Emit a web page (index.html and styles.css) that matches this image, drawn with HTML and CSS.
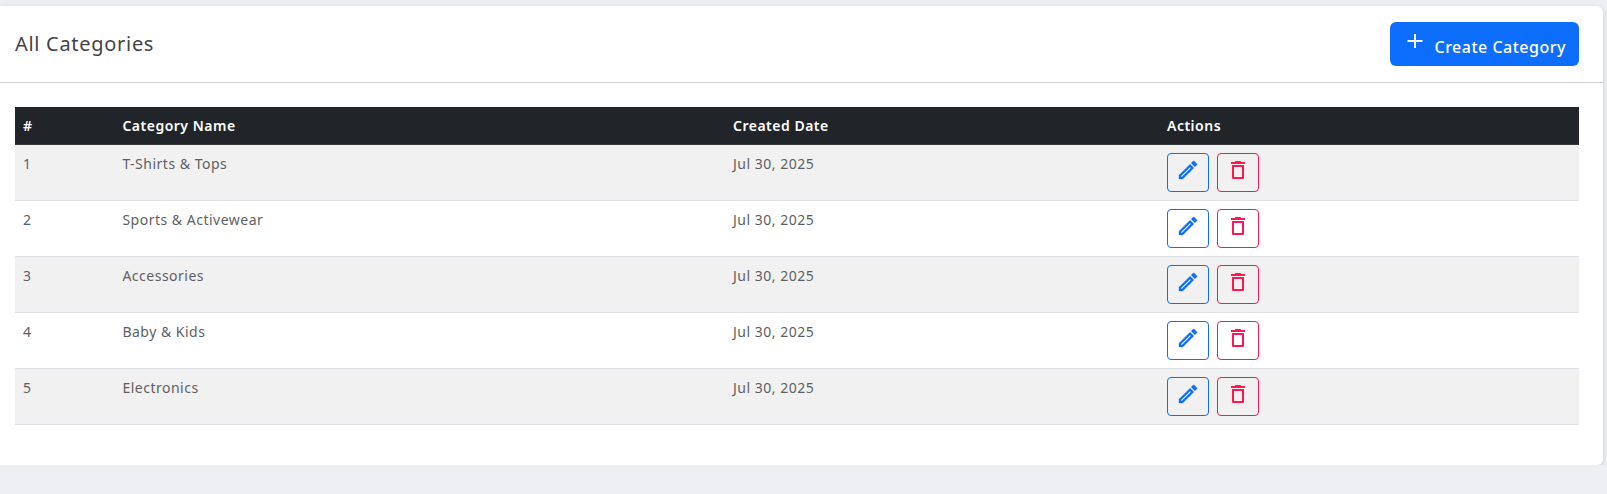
FILE: index.html
```html
<!DOCTYPE html>
<html lang="en">
<head>
<meta charset="utf-8">
<title>All Categories</title>
<link rel="stylesheet" href="styles.css">
</head>
<body>
<svg class="sprite" aria-hidden="true">
  <symbol id="pencil" viewBox="0 0 24 24"><path d="M14.06 9L15 9.94L5.92 19H5V18.08L14.06 9M17.66 3C17.41 3 17.15 3.1 16.96 3.29L15.13 5.12L18.88 8.87L20.71 7.04C21.1 6.65 21.1 6 20.71 5.63L18.37 3.29C18.17 3.09 17.92 3 17.66 3M14.06 6.19L3 17.25V21H6.75L17.81 9.94L14.06 6.19Z"/></symbol>
  <symbol id="trash" viewBox="0 0 24 24"><path fill-rule="evenodd" d="M6 7H18V20.2L17.2 21H6.8L6 20.2ZM8 9V19H16V9ZM15.5 4L14.5 3H9.5L8.5 4H5V6H19V4Z"/></symbol>
  <symbol id="plus" viewBox="0 0 24 24"><path d="M19.5 13H13V19H11V13H4.5V11H11V5H13V11H19.5Z"/></symbol>
</svg>
<main class="card">
  <header class="card-header">
    <h1 class="card-title">All Categories</h1>
    <button class="create"><svg class="create-icon"><use href="#plus"/></svg><span class="create-label">Create Category</span></button>
  </header>
  <div class="card-body">
    <table class="table">
      <colgroup><col class="col-id"><col class="col-name"><col class="col-date"><col></colgroup>
      <thead>
        <tr><th>#</th><th>Category Name</th><th>Created Date</th><th>Actions</th></tr>
      </thead>
      <tbody>
        <tr><td>1</td><td>T-Shirts &amp; Tops</td><td>Jul 30, 2025</td><td><div class="actions"><button class="action edit" aria-label="Edit"><svg class="icon"><use href="#pencil"/></svg></button><button class="action delete" aria-label="Delete"><svg class="icon"><use href="#trash"/></svg></button></div></td></tr>
        <tr><td>2</td><td>Sports &amp; Activewear</td><td>Jul 30, 2025</td><td><div class="actions"><button class="action edit" aria-label="Edit"><svg class="icon"><use href="#pencil"/></svg></button><button class="action delete" aria-label="Delete"><svg class="icon"><use href="#trash"/></svg></button></div></td></tr>
        <tr><td>3</td><td>Accessories</td><td>Jul 30, 2025</td><td><div class="actions"><button class="action edit" aria-label="Edit"><svg class="icon"><use href="#pencil"/></svg></button><button class="action delete" aria-label="Delete"><svg class="icon"><use href="#trash"/></svg></button></div></td></tr>
        <tr><td>4</td><td>Baby &amp; Kids</td><td>Jul 30, 2025</td><td><div class="actions"><button class="action edit" aria-label="Edit"><svg class="icon"><use href="#pencil"/></svg></button><button class="action delete" aria-label="Delete"><svg class="icon"><use href="#trash"/></svg></button></div></td></tr>
        <tr><td>5</td><td>Electronics</td><td>Jul 30, 2025</td><td><div class="actions"><button class="action edit" aria-label="Edit"><svg class="icon"><use href="#pencil"/></svg></button><button class="action delete" aria-label="Delete"><svg class="icon"><use href="#trash"/></svg></button></div></td></tr>
      </tbody>
    </table>
  </div>
</main>
</body>
</html>
```
FILE: styles.css
```css
* { box-sizing: border-box; }
body {
  margin: 0;
  padding: 6px 4px 0 0;
  background: #eeeff2;
  font-family: "Noto Sans", sans-serif;
  font-size: 14px;
  line-height: 21px;
  letter-spacing: 0.5px;
  color: #5e5f63;
}
.sprite { display: none; }
.card {
  height: 459px;
  background: #fff;
  border-radius: 0 6px 6px 0;
  box-shadow: 0 2px 6px rgba(0, 0, 0, 0.14);
}
.card-header {
  display: flex;
  justify-content: space-between;
  height: 77px;
  padding: 16px 24px 0 15px;
  border-bottom: 1px solid #cfcfcf;
}
.card-title {
  margin: 10px 0 0;
  font-size: 20px;
  line-height: 24px;
  font-weight: 400;
  letter-spacing: 0.7px;
  color: #444;
}
.create {
  display: flex;
  width: 189px;
  height: 44px;
  padding: 0 0 0 12.5px;
  border: 0;
  border-radius: 6px;
  background: #0d6efd;
  color: #fff;
  font-family: inherit;
  font-size: 16px;
  font-weight: 500;
  letter-spacing: 0.5px;
}
.create-icon { width: 24px; height: 24px; margin: 7px 8px 0 0; fill: currentColor; }
.create-label { margin-top: 13px; line-height: 24px; white-space: nowrap; }
.card-body { padding: 24px 24px 0 15px; }
.table {
  width: 100%;
  table-layout: fixed;
  border-collapse: separate;
  border-spacing: 0;
}
.col-id { width: 99px; }
.col-name { width: 611px; }
.col-date { width: 434px; }
.table th {
  height: 38px;
  padding: 8px;
  background: #212529;
  border-bottom: 1px solid #373b3e;
  color: #fff;
  font-weight: 600;
  text-align: left;
}
.table td {
  height: 56px;
  padding: 8px;
  border-bottom: 1px solid #dee2e6;
  vertical-align: top;
}
.table th:nth-child(2), .table td:nth-child(2) { padding-left: 8.4px; }
.table tbody tr:nth-child(odd) { background: #f1f1f1; }
.actions { display: flex; gap: 8px; }
.action {
  display: flex;
  width: 42px;
  height: 39px;
  padding: 4px 0 0 8px;
  border: 1px solid currentColor;
  border-radius: 4px;
  background: transparent;
}
.edit { color: #0d6efd; }
.delete { color: #ff1654; }
.icon { width: 24px; height: 24px; fill: currentColor; }
.edit .icon { stroke: currentColor; stroke-width: 0.35; }
```
